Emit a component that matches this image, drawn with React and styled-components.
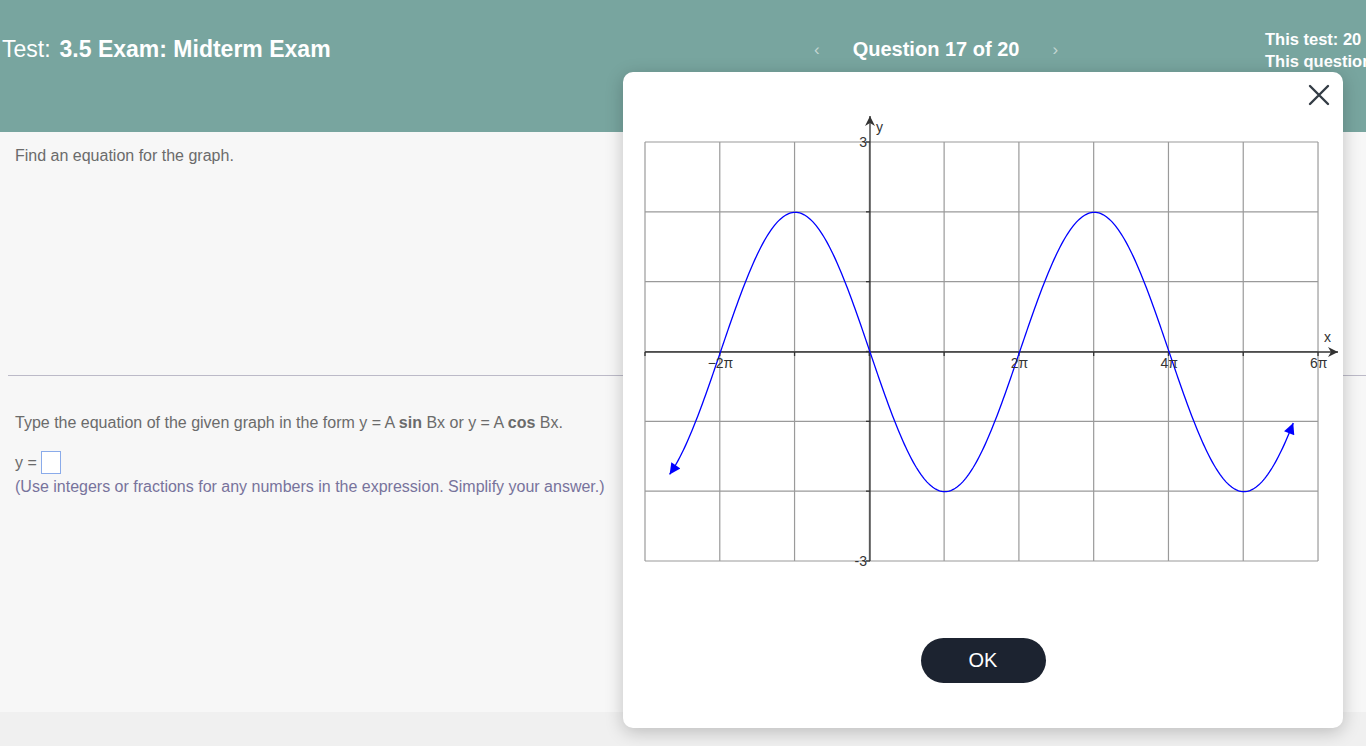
import React from 'react';
import styled, { createGlobalStyle } from 'styled-components';

const GlobalStyle = createGlobalStyle`
  html, body {
    margin: 0;
    padding: 0;
    height: 100%;
    overflow: hidden;
    background: #f0f0f0;
    font-family: 'Liberation Sans', Arial, sans-serif;
  }
`;

const Page = styled.div`
  width: 1366px;
  height: 746px;
  overflow: hidden;
  position: relative;
`;

const Header = styled.header`
  height: 132px;
  background: #78a59f;
  color: #fff;
  display: flex;
  align-items: flex-start;
  white-space: nowrap;
`;

const TestTitle = styled.div`
  flex: 0 0 805px;
  padding: 36px 0 0 2px;
  font-size: 23px;
  box-sizing: border-box;
  b {
    margin-left: 9px;
  }
`;

const Nav = styled.div`
  flex: 0 0 460px;
  display: flex;
  align-items: center;
  padding-top: 38px;
  font-size: 20px;
  font-weight: bold;
`;

const NavArrow = styled.span`
  color: #c3d6d2;
  font-size: 17px;
  font-weight: normal;
  margin: ${(p) => (p.$left ? '0 33px 0 9px' : '0 0 0 33px')};
`;

const Stats = styled.div`
  flex: 0 0 auto;
  padding-top: 28px;
  font-size: 16.5px;
  font-weight: bold;
  line-height: 22px;
`;

const Content = styled.main`
  height: 580px;
  background: #f7f7f7;
  color: #6b6b6b;
  font-size: 16px;
`;

const Prompt = styled.section`
  height: 243px;
  padding: 15px 0 0 15px;
  box-sizing: border-box;
`;

const Divider = styled.hr`
  margin: 0 0 0 8px;
  border: none;
  border-top: 1px solid #bcbac8;
`;

const Answer = styled.section`
  padding: 37px 0 0 15px;
  line-height: 20px;
`;

const AnswerLine = styled.div`
  display: flex;
  align-items: center;
  margin-top: ${(p) => p.$gap || 0}px;
`;

const BlankBox = styled.span`
  display: inline-block;
  width: 18px;
  height: 21px;
  margin-left: 4px;
  border: 1.5px solid #8aabea;
  background: #fff;
`;

const Hint = styled.div`
  color: #77739c;
  margin-top: 3px;
`;

const Modal = styled.div`
  position: absolute;
  left: 623px;
  top: 72px;
  width: 720px;
  height: 656px;
  background: #fff;
  border-radius: 10px;
  box-shadow: 0 4px 18px rgba(0, 0, 0, 0.22);
  display: flex;
  flex-direction: column;
`;

const CloseRow = styled.div`
  height: 38px;
  display: flex;
  justify-content: flex-end;
  padding: 11px 12px 0 0;
  box-sizing: border-box;
`;

const CloseButton = styled.button`
  width: 24px;
  height: 24px;
  padding: 0;
  border: none;
  background: none;
  cursor: pointer;
`;

const Graph = styled.svg`
  display: block;
  margin-left: 12px;
  font-family: 'Liberation Sans', Arial, sans-serif;
`;

const OkButton = styled.button`
  align-self: center;
  margin-top: 48px;
  width: 125px;
  height: 45px;
  border: none;
  border-radius: 23px;
  background: #1c2330;
  color: #fff;
  font-size: 20px;
  font-family: 'Liberation Sans', Arial, sans-serif;
  cursor: pointer;
`;

const X0 = 235;
const Y0 = 242;
const XU = 74.78;
const YU = 69.83;
const LEFT = 10;
const RIGHT = 683;
const TOP = 32;
const BOTTOM = 451;

function curvePath() {
  const pts = [];
  for (let t = -2.68; t <= 5.671; t += 0.02) {
    const y = -2 * Math.sin((t * Math.PI) / 2);
    pts.push(`${(X0 + t * XU).toFixed(2)},${(Y0 - y * YU).toFixed(2)}`);
  }
  return 'M' + pts.join(' L');
}

function SineGraph() {
  const vLines = Array.from({ length: 10 }, (_, i) => LEFT + i * XU);
  const hLines = Array.from({ length: 7 }, (_, j) => TOP + j * YU);
  const xLabels = [
    { t: -2, s: '−2π' },
    { t: 2, s: '2π' },
    { t: 4, s: '4π' },
    { t: 6, s: '6π' },
  ];
  return (
    <Graph width="706" height="480" viewBox="0 0 706 480">
      <defs>
        <marker id="curveArrow" viewBox="0 0 10 10" refX="10" refY="5" markerWidth="14" markerHeight="11"
          markerUnits="userSpaceOnUse" orient="auto-start-reverse">
          <path d="M0,0 L10,5 L0,10 z" fill="#0000ff" />
        </marker>
        <marker id="axisArrow" viewBox="0 0 10 10" refX="10" refY="5" markerWidth="12" markerHeight="10"
          markerUnits="userSpaceOnUse" orient="auto">
          <path d="M0,0 L10,5 L0,10 L3,5 z" fill="#333" />
        </marker>
      </defs>
      <g stroke="#9a9a9a" strokeWidth="1.2">
        {vLines.map((x) => (
          <line key={'v' + x} x1={x} y1={TOP} x2={x} y2={BOTTOM} />
        ))}
        {hLines.map((y) => (
          <line key={'h' + y} x1={LEFT} y1={y} x2={RIGHT} y2={y} />
        ))}
      </g>
      <g stroke="#333" strokeWidth="1.3">
        <line x1={LEFT} y1={Y0} x2={703} y2={Y0} markerEnd="url(#axisArrow)" />
        <line x1={X0} y1={BOTTOM} x2={X0} y2={6} markerEnd="url(#axisArrow)" />
        {vLines.map((x) => (
          <line key={'tx' + x} x1={x} y1={Y0} x2={x} y2={Y0 + 4} />
        ))}
        {hLines.map((y) => (
          <line key={'ty' + y} x1={X0 - 4} y1={y} x2={X0} y2={y} />
        ))}
      </g>
      <path d={curvePath()} fill="none" stroke="#0000ff" strokeWidth="1.3"
        markerStart="url(#curveArrow)" markerEnd="url(#curveArrow)" />
      <g fill="#333" fontSize="14">
        {xLabels.map((l) => (
          <text key={l.s} x={X0 + l.t * XU} y={Y0 + 16} textAnchor="middle">{l.s}</text>
        ))}
        <text x={X0 - 3} y={TOP + 5} textAnchor="end">3</text>
        <text x={X0 - 3} y={BOTTOM + 5} textAnchor="end">-3</text>
        <text x={X0 + 6} y={22}>y</text>
        <text x={689} y={232}>x</text>
      </g>
    </Graph>
  );
}

export default function App() {
  return (
    <Page>
      <GlobalStyle />
      <Header>
        <TestTitle>
          Test:<b>3.5 Exam: Midterm Exam</b>
        </TestTitle>
        <Nav>
          <NavArrow $left>‹</NavArrow>
          Question 17 of 20
          <NavArrow>›</NavArrow>
        </Nav>
        <Stats>
          <div>This test: 20 point(s) possible</div>
          <div>This question: 1 point(s) possible</div>
        </Stats>
      </Header>
      <Content>
        <Prompt>Find an equation for the graph.</Prompt>
        <Divider />
        <Answer>
          <div>
            Type the equation of the given graph in the form y = A <b>sin</b> Bx or y = A <b>cos</b> Bx.
          </div>
          <AnswerLine $gap={18}>
            y =<BlankBox />
          </AnswerLine>
          <Hint>(Use integers or fractions for any numbers in the expression. Simplify your answer.)</Hint>
        </Answer>
      </Content>
      <Modal>
        <CloseRow>
          <CloseButton aria-label="Close">
            <svg width="24" height="24" viewBox="0 0 24 24">
              <path d="M3 3 L21 21 M21 3 L3 21" stroke="#333c45" strokeWidth="2.4" strokeLinecap="round" />
            </svg>
          </CloseButton>
        </CloseRow>
        <SineGraph />
        <OkButton>OK</OkButton>
      </Modal>
    </Page>
  );
}
